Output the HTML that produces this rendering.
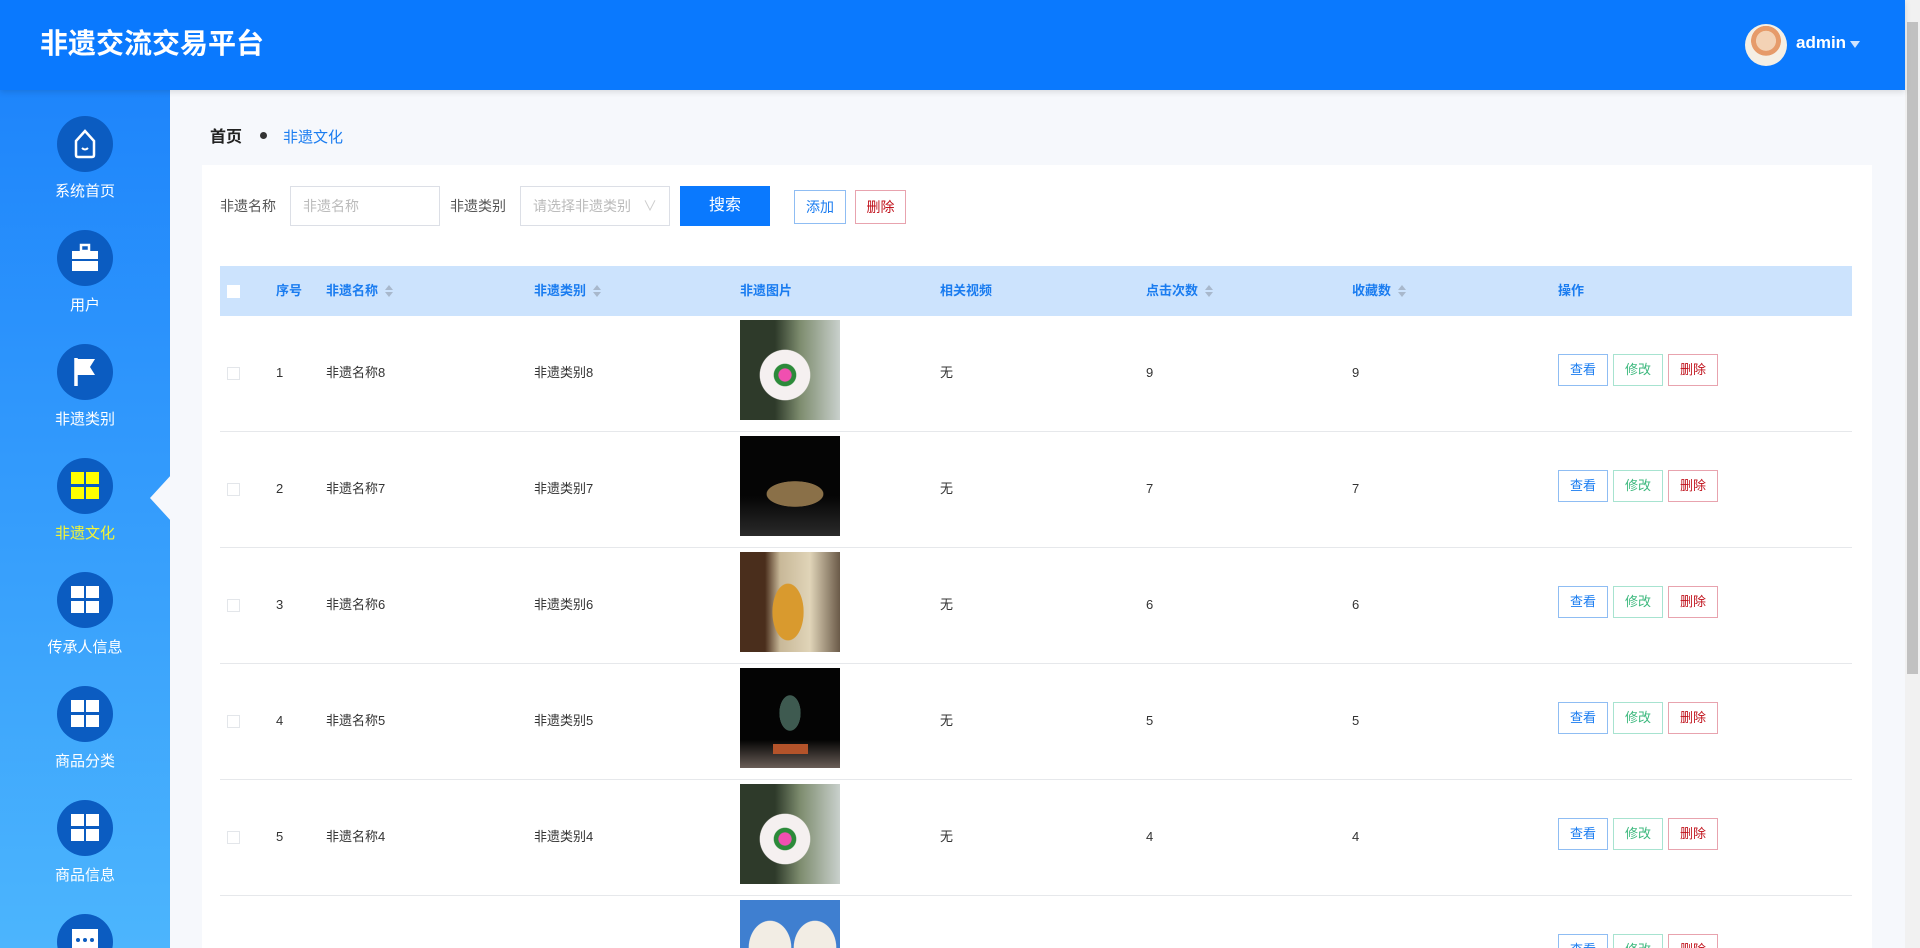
<!DOCTYPE html>
<html><head><meta charset="utf-8"><style>
*{margin:0;padding:0;box-sizing:border-box}
html,body{width:1920px;height:948px;overflow:hidden}
body{background:#f6f8fc;font-family:"Liberation Sans","Noto Sans CJK SC",sans-serif}
#w{position:relative;width:1920px;height:948px;overflow:hidden}
.hdr{position:absolute;left:0;top:0;width:1905px;height:90px;background:#0a79fe;box-shadow:0 2px 6px rgba(0,0,0,.12);z-index:3}
.title{position:absolute;left:40px;top:26px;color:#fff;font-size:28px;font-weight:bold;line-height:36px}
.av{position:absolute;left:1745px;top:24px;width:42px;height:42px;border-radius:50%;background:radial-gradient(circle at 50% 40%,#f3d2b5 0 30%,#e69b6a 31% 45%,#f5efe4 46%)}
.adm{position:absolute;left:1796px;top:33px;color:#fff;font-size:17px;font-weight:bold}
.tri{position:absolute;left:1850px;top:41px;border:5px solid transparent;border-top:7px solid #cfe4ff}
.side{position:absolute;left:0;top:90px;width:170px;height:858px;overflow:hidden;background:linear-gradient(#1e85fb,#4cb5fd)}
.it{position:absolute;left:0;width:170px;text-align:center;color:#fff;font-size:15px;line-height:20px}
.ci{width:56px;height:56px;border-radius:50%;background:#0b5cc1;margin:0 auto 10px;position:relative}
.g{position:absolute;left:14px;top:14px;width:28px;height:28px}
.g i{position:absolute;width:13px;height:12px;background:#fff}
.notch{position:absolute;left:150px;top:474px;width:0;height:0;border-top:24px solid transparent;border-bottom:24px solid transparent;border-right:22px solid #f6f8fc}
.sb{position:absolute;left:1905px;top:0;width:15px;height:948px;background:#f1f1f1}
.sb div{position:absolute;left:2px;top:22px;width:11px;height:652px;background:#c1c1c1}
.bc{position:absolute;left:210px;top:128px;font-size:16px;font-weight:bold;color:#222;line-height:20px}
.bc b{display:inline-block;width:7px;height:7px;border-radius:50%;background:#333;margin:0 16px 3px 18px}
.bc span{color:#1a7cf0;font-weight:normal;font-size:15px}
.card{position:absolute;left:202px;top:165px;width:1670px;height:783px;background:#fff}
.lab{position:absolute;top:196px;font-size:14px;color:#555;line-height:20px}
.inp{position:absolute;top:186px;height:40px;border:1px solid #dcdfe6;background:#fff;font-size:14px;color:#bbb;padding:0 12px;line-height:38px}
.btn{position:absolute;font-size:14px;text-align:center}
.th{position:absolute;left:220px;top:266px;width:1632px;height:50px;background:#cce3fd}
.th span{position:absolute;top:15px;font-size:13px;font-weight:bold;color:#1a7cf0;line-height:20px}
.so{display:inline-block;margin-left:7px;width:8px;height:12px;vertical-align:-2px;position:relative}
.so:before,.so:after{content:"";position:absolute;left:0;border-left:4px solid transparent;border-right:4px solid transparent}
.so:before{top:0;border-bottom:5px solid #a8b8cc}
.so:after{bottom:0;border-top:5px solid #a8b8cc}
.row{position:absolute;left:220px;width:1632px;height:116px;border-bottom:1px solid #e6e8eb;background:#fff}
.row span{position:absolute;top:47px;font-size:13px;color:#333;line-height:20px}
.cb{position:absolute;left:7px;top:51px;width:13px;height:13px;border:1px solid #e3e6ea;background:#fff}
.img{position:absolute;left:520px;top:4px;width:100px;height:100px}
.ab{position:absolute;top:38px;width:50px;height:32px;border:1px solid;font-size:13px;text-align:center;line-height:30px;background:#fff}
</style></head><body><div id="w">
<div class="hdr"><div class="title">非遗交流交易平台</div><div class="av"></div><div class="adm">admin</div><div class="tri"></div></div>
<div class="side">
<div class="it" style="top:26px"><div class="ci"><svg width="56" height="56" viewBox="0 0 56 56"><path d="M19 25 L28 15 L37 25 V39 Q37 41 35 41 H21 Q19 41 19 39 Z" fill="none" stroke="#fff" stroke-width="2.5"/><path d="M25 32 Q28 35 31 32" stroke="#fff" stroke-width="2" fill="none"/></svg></div>系统首页</div>
<div class="it" style="top:140px"><div class="ci"><svg width="56" height="56" viewBox="0 0 56 56"><rect x="24" y="15" width="8" height="6" fill="none" stroke="#fff" stroke-width="2.5"/><rect x="15" y="21" width="26" height="8" fill="#fff"/><rect x="15" y="31" width="26" height="10" fill="#fff"/></svg></div>用户</div>
<div class="it" style="top:254px"><div class="ci"><svg width="56" height="56" viewBox="0 0 56 56"><path d="M19 14 V42" stroke="#fff" stroke-width="3.5"/><path d="M20 15 H38 L33 23 L38 31 H20 Z" fill="#fff"/></svg></div>非遗类别</div>
<div class="it" style="top:368px;color:#f5f534"><div class="ci"><div class="g"><i style="left:0;top:0;background:#ff0"></i><i style="left:15px;top:0;background:#ff0"></i><i style="left:0;top:15px;background:#ff0"></i><i style="left:15px;top:15px;background:#ff0"></i></div></div>非遗文化</div>
<div class="it" style="top:482px"><div class="ci"><div class="g"><i style="left:0;top:0"></i><i style="left:15px;top:0"></i><i style="left:0;top:15px"></i><i style="left:15px;top:15px"></i></div></div>传承人信息</div>
<div class="it" style="top:596px"><div class="ci"><div class="g"><i style="left:0;top:0"></i><i style="left:15px;top:0"></i><i style="left:0;top:15px"></i><i style="left:15px;top:15px"></i></div></div>商品分类</div>
<div class="it" style="top:710px"><div class="ci"><div class="g"><i style="left:0;top:0"></i><i style="left:15px;top:0"></i><i style="left:0;top:15px"></i><i style="left:15px;top:15px"></i></div></div>商品信息</div>
<div class="it" style="top:824px;height:34px;overflow:hidden"><div class="ci"><svg width="56" height="56" viewBox="0 0 56 56"><rect x="15" y="15" width="26" height="22" fill="#fff"/><circle cx="21" cy="26" r="2" fill="#0b5cc1"/><circle cx="28" cy="26" r="2" fill="#0b5cc1"/><circle cx="35" cy="26" r="2" fill="#0b5cc1"/></svg></div></div>
</div>
<div class="notch"></div>
<div class="sb"><div></div></div>
<div class="bc">首页<b></b><span>非遗文化</span></div>
<div class="card"></div>
<div class="lab" style="left:220px">非遗名称</div>
<div class="inp" style="left:290px;width:150px">非遗名称</div>
<div class="lab" style="left:450px">非遗类别</div>
<div class="inp" style="left:520px;width:150px">请选择非遗类别 <span style="float:right;color:#ccc">∨</span></div>
<div class="btn" style="left:680px;top:186px;width:90px;height:40px;background:#0a79fe;color:#fff;line-height:40px;font-size:16px">搜索</div>
<div class="btn" style="left:794px;top:190px;width:52px;height:34px;border:1px solid #8fbdf3;color:#1a7cf0;line-height:32px">添加</div>
<div class="btn" style="left:855px;top:190px;width:51px;height:34px;border:1px solid #e8a3ae;color:#c0101a;line-height:32px">删除</div>
<div class="th"><div style="position:absolute;left:7px;top:19px;width:13px;height:13px;background:#fff"></div>
<span style="left:56px">序号</span><span style="left:106px">非遗名称<i class="so"></i></span><span style="left:314px">非遗类别<i class="so"></i></span><span style="left:520px">非遗图片</span><span style="left:720px">相关视频</span><span style="left:926px">点击次数<i class="so"></i></span><span style="left:1132px">收藏数<i class="so"></i></span><span style="left:1338px">操作</span></div>

<div class="row" style="top:316px"><div class="cb"></div><span style="left:56px">1</span><span style="left:106px">非遗名称8</span><span style="left:314px">非遗类别8</span><div class="img" style="background:radial-gradient(circle at 45% 55%,#f04fb0 0 8%,#2c8a3a 9% 14%,#f5f0f0 15% 32%,transparent 33%),linear-gradient(90deg,#2e3a2a 0 35%,#7d8c6e 60%,#c9d0cc)"></div><span style="left:720px">无</span><span style="left:926px">9</span><span style="left:1132px">9</span><div class="ab" style="left:1338px;border-color:#8fbdf3;color:#1a7cf0">查看</div><div class="ab" style="left:1393px;border-color:#a7e3d0;color:#3cb87d">修改</div><div class="ab" style="left:1448px;border-color:#e8a3ae;color:#c0101a">删除</div></div>
<div class="row" style="top:432px"><div class="cb"></div><span style="left:56px">2</span><span style="left:106px">非遗名称7</span><span style="left:314px">非遗类别7</span><div class="img" style="background:radial-gradient(ellipse 40% 18% at 55% 58%,#8a7048 0 70%,transparent 72%),linear-gradient(#050505 0 60%,#2a2a2a)"></div><span style="left:720px">无</span><span style="left:926px">7</span><span style="left:1132px">7</span><div class="ab" style="left:1338px;border-color:#8fbdf3;color:#1a7cf0">查看</div><div class="ab" style="left:1393px;border-color:#a7e3d0;color:#3cb87d">修改</div><div class="ab" style="left:1448px;border-color:#e8a3ae;color:#c0101a">删除</div></div>
<div class="row" style="top:548px"><div class="cb"></div><span style="left:56px">3</span><span style="left:106px">非遗名称6</span><span style="left:314px">非遗类别6</span><div class="img" style="background:radial-gradient(ellipse 22% 40% at 48% 60%,#d99a2e 0 70%,transparent 72%),linear-gradient(90deg,#4a2e1c 0 25%,#c8b898 40%,#e0d4b8 70%,#6a5a48)"></div><span style="left:720px">无</span><span style="left:926px">6</span><span style="left:1132px">6</span><div class="ab" style="left:1338px;border-color:#8fbdf3;color:#1a7cf0">查看</div><div class="ab" style="left:1393px;border-color:#a7e3d0;color:#3cb87d">修改</div><div class="ab" style="left:1448px;border-color:#e8a3ae;color:#c0101a">删除</div></div>
<div class="row" style="top:664px"><div class="cb"></div><span style="left:56px">4</span><span style="left:106px">非遗名称5</span><span style="left:314px">非遗类别5</span><div class="img" style="background:linear-gradient(90deg,transparent 33%,#b4532a 33% 68%,transparent 68%) 0 76px/100px 10px no-repeat,radial-gradient(ellipse 15% 25% at 50% 45%,#3e5a50 0 70%,transparent 72%),linear-gradient(#040404 0 72%,#6a5e58)"></div><span style="left:720px">无</span><span style="left:926px">5</span><span style="left:1132px">5</span><div class="ab" style="left:1338px;border-color:#8fbdf3;color:#1a7cf0">查看</div><div class="ab" style="left:1393px;border-color:#a7e3d0;color:#3cb87d">修改</div><div class="ab" style="left:1448px;border-color:#e8a3ae;color:#c0101a">删除</div></div>
<div class="row" style="top:780px"><div class="cb"></div><span style="left:56px">5</span><span style="left:106px">非遗名称4</span><span style="left:314px">非遗类别4</span><div class="img" style="background:radial-gradient(circle at 45% 55%,#f04fb0 0 8%,#2c8a3a 9% 14%,#f5f0f0 15% 32%,transparent 33%),linear-gradient(90deg,#2e3a2a 0 35%,#7d8c6e 60%,#c9d0cc)"></div><span style="left:720px">无</span><span style="left:926px">4</span><span style="left:1132px">4</span><div class="ab" style="left:1338px;border-color:#8fbdf3;color:#1a7cf0">查看</div><div class="ab" style="left:1393px;border-color:#a7e3d0;color:#3cb87d">修改</div><div class="ab" style="left:1448px;border-color:#e8a3ae;color:#c0101a">删除</div></div>
<div class="row" style="top:896px;height:52px;border:0;overflow:hidden"><div class="img" style="height:48px;background:radial-gradient(ellipse 30% 80% at 30% 100%,#f2ede4 0 70%,transparent 72%),radial-gradient(ellipse 30% 80% at 75% 100%,#f2ede4 0 70%,transparent 72%),#3f7fd0"></div><div class="ab" style="left:1338px;height:14px;border-bottom:0;color:#1a7cf0;border-color:#8fbdf3;overflow:hidden">查看</div><div class="ab" style="left:1393px;height:14px;border-bottom:0;border-color:#a7e3d0;color:#3cb87d;overflow:hidden">修改</div><div class="ab" style="left:1448px;height:14px;border-bottom:0;border-color:#e8a3ae;color:#c0101a;overflow:hidden">删除</div></div>
</div></body></html>
